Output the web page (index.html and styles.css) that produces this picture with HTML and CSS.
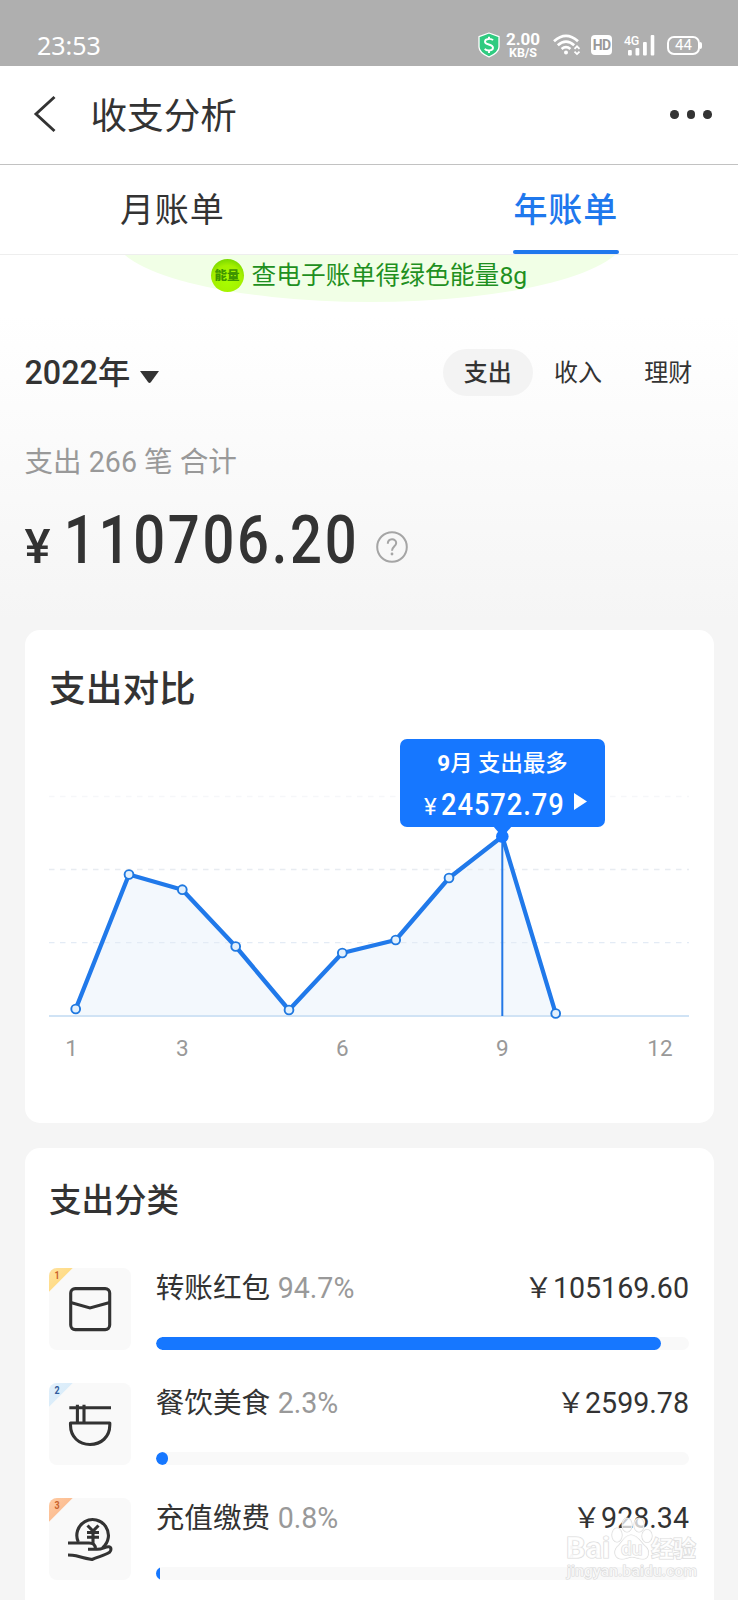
FILE: index.html
```html
<!DOCTYPE html>
<html lang="zh-CN">
<head>
<meta charset="utf-8">
<title>收支分析</title>
<link rel="stylesheet" href="styles.css">
</head>
<body>
<div class="screen">
  <div class="status">
    <span class="clock">23:53</span>
    <div class="status-icons">
      <svg class="shield" width="22" height="26" viewBox="0 0 22 26"><path d="M11 1 L21 4.600 V15 Q21 20.500 11 25 Q1 20.500 1 15 V4.600 Z" fill="#2fcb80" stroke="#fff" stroke-width="1.300" stroke-linejoin="round"/><path d="M15 8.300 C13.500 6.300 7 6.200 7 9.700 C7 13.200 15 11.800 15 15.800 C15 19.300 8.300 19.200 6.800 16.800 M11 4.700 V7 M11 18.500 V21" fill="none" stroke="#fff" stroke-width="1.900"/></svg>
      <div class="speed"><span class="rate">2.00</span><span class="unit">KB/S</span></div>
      <svg class="wifi" width="28" height="22" viewBox="0 0 28 22" fill="none" stroke="#fff" stroke-width="2.700"><path d="M1 7.300 Q13 -3.700 25 7.300"/><path d="M4.800 11.300 Q13 4 21.200 11.300"/><path d="M8.600 15 Q13 11.300 17.400 15"/><circle cx="13" cy="18.600" r="2" fill="#fff" stroke="none"/><path d="M21.500 14.800 L24 12.300 L26.500 14.800 M21.500 17.600 L24 20.100 L26.500 17.600" stroke-width="1.800"/></svg>
      <span class="hd">HD</span>
      <div class="signal"><span class="net">4G</span><svg width="27" height="21" viewBox="0 0 27 21" fill="#fff"><rect x="0" y="15" width="3.800" height="5.500" rx="1"/><rect x="7.500" y="13" width="3.800" height="7.500" rx="1"/><rect x="15" y="7" width="3.800" height="13.500" rx="1"/><rect x="22.700" y="0" width="3.600" height="20.500" rx="1"/></svg></div>
      <div class="battery"><span class="level">44</span></div>
    </div>
  </div>

  <header class="navbar">
    <svg class="back" width="24" height="38" viewBox="0 0 24 38"><path d="M21.500 2 L3 19 L21.500 36" fill="none" stroke="#333" stroke-width="2.900"/></svg>
    <h1 class="title">收支分析</h1>
    <div class="more"><i></i><i></i><i></i></div>
  </header>

  <nav class="tabs">
    <span class="tab">月账单</span>
    <span class="tab active">年账单</span>
  </nav>

  <main class="content">
    <div class="energy">
      <svg class="energy-bg" width="512" height="48" viewBox="0 0 512 48"><ellipse cx="256" cy="-19" rx="256" ry="66" fill="#f1ffe6"/></svg>
      <div class="energy-line"><span class="coin">能量</span><span>查电子账单得绿色能量8g</span></div>
    </div>

    <div class="filter">
      <div class="year">2022年<svg width="19" height="13" viewBox="0 0 19 13"><path d="M0 0 H19 L11 11 Q9.500 13 8 11 Z" fill="#333"/></svg></div>
      <div class="kinds"><span class="kind on">支出</span><span class="kind">收入</span><span class="kind">理财</span></div>
    </div>

    <p class="count">支出 266 笔 合计</p>
    <div class="total">
      <span class="yen">¥</span><span class="sum">110706.20</span>
      <svg class="help" width="32" height="32" viewBox="0 0 32 32" fill="none" stroke="#a5a5a5"><circle cx="16" cy="16" r="14.800" stroke-width="2"/><path d="M11.800 12.800 C11.800 7 20.200 7 20.200 12 C20.200 15.300 16 15.300 16 19.800" stroke-width="2"/><circle cx="16" cy="23" r="1.400" fill="#a5a5a5" stroke="none"/></svg>
    </div>

    <section class="card compare">
      <h2 class="card-title large">支出对比</h2>
      <div class="chart">
        <svg width="640" height="340" viewBox="49 730 640 340">
          <path d="M75.700 1009 L129 874.500 L182.300 889.700 L235.700 946.500 L289 1010 L342.300 953 L395.700 940 L449 878 L502.300 836.500 L555.700 1013.500 V1016 H75.700 Z" fill="#f3f8fd"/>
          <g stroke-width="1.300" stroke-dasharray="5.500 5.500">
            <path d="M49 796.500 H689" stroke="#f6f7f9"/>
            <path d="M49 869.500 H689" stroke="#e8ecf1"/>
            <path d="M49 942.700 H689" stroke="#e3ebf5"/>
          </g>
          <path d="M49 1016 H689" stroke="#d0e3f5" stroke-width="2"/>
          <path d="M502.300 836 V1016" stroke="#2378e6" stroke-width="2"/>
          <path d="M75.700 1009 L129 874.500 L182.300 889.700 L235.700 946.500 L289 1010 L342.300 953 L395.700 940 L449 878 L502.300 836.500 L555.700 1013.500" fill="none" stroke="#2079ea" stroke-width="4.300" stroke-linejoin="round"/>
          <g fill="#e2f0fd" stroke="#2079e0" stroke-width="1.900">
            <circle cx="75.700" cy="1009" r="4.400"/><circle cx="129" cy="874.500" r="4.400"/><circle cx="182.300" cy="889.700" r="4.400"/><circle cx="235.700" cy="946.500" r="4.400"/><circle cx="289" cy="1010" r="4.400"/><circle cx="342.300" cy="953" r="4.400"/><circle cx="395.700" cy="940" r="4.400"/><circle cx="449" cy="878" r="4.400"/><circle cx="555.700" cy="1013.500" r="4.400"/>
          </g>
          <path d="M493 826 H512 L502.500 837 Z" fill="#1677ff"/><circle cx="502.300" cy="836.500" r="6.300" fill="#1677ff"/>
          <g class="axis"><text x="71.500" y="1055.500">1</text><text x="182.300" y="1055.500">3</text><text x="342.300" y="1055.500">6</text><text x="502.300" y="1055.500">9</text><text x="660" y="1055.500">12</text></g>
        </svg>
        <div class="tip">
          <span class="tip-name"><strong>9</strong>月 支出最多</span>
          <span class="tip-sum"><span class="tip-yen">¥</span><span class="tip-num">24572.79</span><svg width="13" height="17" viewBox="0 0 13 17"><path d="M0 0 L13 8.500 L0 17 Z" fill="#fff"/></svg></span>
        </div>
      </div>
    </section>

    <section class="card sorts">
      <h2 class="card-title">支出分类</h2>
      <div class="row">
        <div class="icon first"><span class="rank">1</span><svg width="82" height="82" viewBox="0 0 82 82"><rect x="21.700" y="20.600" width="39" height="41" rx="4.500"/><path d="M21.700 34.500 L41 40 L60.700 34.500"/></svg></div>
        <div class="info"><div class="line"><span>转账红包 <em>94.7%</em></span><span><span class="cny">￥</span>105169.60</span></div><div class="bar"><b style="width:94.700%"></b></div></div>
      </div>
      <div class="row">
        <div class="icon second"><span class="rank">2</span><svg width="82" height="82" viewBox="0 0 82 82"><path d="M20.300 24.800 H62 M28.400 21.700 V40 M35 21.700 V40"/><path d="M21.500 40 H60.800 V42 C60.800 54 52 61.500 41 61.500 C30 61.500 21.500 54 21.500 42 Z" stroke-linejoin="round"/></svg></div>
        <div class="info"><div class="line"><span>餐饮美食 <em>2.3%</em></span><span><span class="cny">￥</span>2599.78</span></div><div class="bar"><b style="width:2.300%"></b></div></div>
      </div>
      <div class="row">
        <div class="icon third"><span class="rank">3</span><svg width="82" height="82" viewBox="0 0 82 82"><path d="M29.300 44 A15.800 15.800 0 1 1 53.500 49.700"/><path d="M19 45 H40 Q46.500 45 46.500 51 M39 51.300 H48 C54 51.300 56 48.500 60 48.800 C62.500 49.300 62.500 52.500 60.500 54.300 C56 57.300 50 58.500 43 61.500 Q36 60.500 27 57.800 Q24 57 19 57"/><path d="M38.500 27.500 L44 33 L49.500 27.500 M44 33 V46 M38 34.500 H50 M38 39.300 H50"/></svg></div>
        <div class="info"><div class="line"><span>充值缴费 <em>0.8%</em></span><span><span class="cny">￥</span>928.34</span></div><div class="bar"><b style="width:.800%"></b></div></div>
      </div>
    </section>
  </main>

  <div class="watermark">
    <svg width="136" height="70" viewBox="0 0 136 70">
      <g class="mark"><ellipse cx="53" cy="22" rx="5" ry="7"/><ellipse cx="63" cy="12" rx="5" ry="7"/><ellipse cx="75" cy="12" rx="5" ry="7"/><ellipse cx="83" cy="23" rx="5" ry="6.500"/><path d="M67 22 C60 22 58 30 53 34 C49 39 51 46 58 46 C63 46 64 44 68 44 C72 44 74 46 79 46 C85 46 86 38 82 34 C77 30 74 22 67 22 Z"/>
      <text x="2" y="45" font-size="30" font-weight="700" textLength="44" lengthAdjust="spacingAndGlyphs">Bai</text><text x="57" y="42" font-size="19" font-weight="500">du</text><text x="87" y="44" font-size="23" font-weight="700" textLength="45">经验</text><text x="3" y="63" font-size="15.500" font-weight="500" textLength="130">jingyan.baidu.com</text></g>
    </svg>
  </div>
</div>
</body>
</html>
```
FILE: styles.css
```css
* { box-sizing: border-box; margin: 0; padding: 0; }
body {
  width: 738px; height: 1600px; overflow: hidden; color: #333;
  font-family: Roboto, "Noto Sans CJK SC", sans-serif; background: #f5f5f5;
}
.screen { position: relative; height: 1600px; overflow: hidden; display: flex; flex-direction: column; }
h1, h2 { font-weight: 400; }

.status { height: 65.5px; flex: none; background: #afafaf; color: #fff; display: flex; justify-content: space-between; padding: 32px 38px 0 37px; }
.clock { font: 400 25px/26px "Noto Sans", sans-serif; }
.status-icons { display: flex; align-items: flex-start; }
.shield { margin: 0 6px 0 0; }
.speed { display: flex; flex-direction: column; align-items: center; width: 34px; margin-right: 13px; font-weight: 700; }
.rate { font-size: 17px; line-height: 14px; }
.unit { font-size: 12.5px; line-height: 14px; letter-spacing: -.1px; }
.wifi { margin: 2px 10px 0 0; }
.hd { width: 21px; height: 20px; margin: 3px 12px 0 0; border-radius: 4px; background: #fff; color: #999; font-size: 14px; font-weight: 700; line-height: 20px; text-align: center; letter-spacing: -.8px; }
.signal { position: relative; width: 31px; height: 21px; margin: 3px 12px 0 0; padding-left: 4px; }
.signal svg { display: block; }
.net { position: absolute; left: 0; top: -1px; font-size: 12.5px; font-weight: 500; line-height: 13px; letter-spacing: -.4px; }
.battery { position: relative; width: 33px; height: 19px; margin-top: 3.5px; border: 2px solid #fff; border-radius: 7px; text-align: center; }
.battery::after { content: ""; position: absolute; right: -3.5px; top: 4px; width: 2px; height: 7px; border-radius: 0 2px 2px 0; background: #fff; }
.level { display: block; font-size: 15px; line-height: 15px; }

.navbar { height: 99.5px; flex: none; display: flex; align-items: center; padding: 0 26px 1px 33px; background: #fff; border-bottom: 1px solid #c2c2c2; }
.title { margin-left: 33.5px; padding-top: 5px; font-size: 36.6px; line-height: 50px; flex: 1; }
.more { display: flex; gap: 8px; }
.more i { width: 8.6px; height: 8.6px; border-radius: 50%; background: #333; }

.tabs { height: 90px; flex: none; display: flex; justify-content: space-between; padding: 0 119.5px; background: #fff; border-bottom: 1px solid #eee; }
.tab { position: relative; width: 105.5px; text-align: center; font-size: 34px; letter-spacing: .8px; line-height: 90px; white-space: nowrap; }
.tab.active { color: #1f78ed; font-weight: 500; }
.tab.active::after { content: ""; position: absolute; left: 0; bottom: 0; width: 105.5px; height: 4px; border-radius: 2px; background: #1f78ed; }

.content { flex: 1; display: flex; flex-direction: column; padding: 0 24.5px; background: linear-gradient(#fff 0, #fff 60px, #f5f5f5 365px); }
.energy { display: flow-root; position: relative; height: 48px; flex: none; }
.energy-bg { position: absolute; left: 89px; top: 0; }
.energy-line { position: relative; display: flex; align-items: center; padding-left: 186px; height: 34px; margin-top: 3px; color: #1f9021; font-size: 24.7px; line-height: 33px; letter-spacing: .1px; white-space: nowrap; }
.coin { width: 33px; height: 33px; margin-right: 8px; flex: none; border-radius: 50%; background: radial-gradient(circle at 50% 65%, #a8ff00 0, #a4f000 55%, #78d800 80%, #68c50d 100%); color: #3f9500; font-size: 12.5px; font-weight: 900; line-height: 34px; letter-spacing: 0; text-align: center; }

.filter { display: flex; justify-content: space-between; align-items: center; height: 47px; margin-top: 46px; flex: none; }
.year { display: flex; align-items: center; font-size: 32.3px; line-height: 46px; font-weight: 500; }
.year svg { margin: 9px 0 0 9.5px; }
.kinds { display: flex; }
.kind { width: 90.3px; height: 46.5px; border-radius: 24px; text-align: center; font-size: 24px; line-height: 48px; }
.kind.on { background: #f3f3f3; font-weight: 500; }

.count { margin-top: 47px; height: 38px; flex: none; line-height: 38px; font-size: 28.6px; color: #999; }
.total { display: flex; align-items: baseline; height: 80px; margin-top: 20px; flex: none; line-height: 78px; font-weight: 500; }
.yen { width: 38px; font-size: 49px; }
.sum { width: 294px; padding-left: 1px; font-size: 66.5px; letter-spacing: 3.2px; white-space: nowrap; transform: scaleX(.845); transform-origin: left; }
.help { align-self: flex-start; margin: 30px 0 0 19px; }

.card { flex: none; background: #fff; border-radius: 15px; padding: 0 24.5px; }
.compare { height: 493px; margin-top: 49px; padding-top: 35px; }
.card-title { font-size: 32.5px; line-height: 52px; height: 50px; font-weight: 500; }
.card-title.large { font-size: 36.7px; line-height: 50px; }
.chart { position: relative; margin-top: 15px; height: 340px; }
.chart > svg { display: block; }
.axis { font-size: 22.5px; fill: #999; text-anchor: middle; }
.tip { position: absolute; left: 351px; top: 9px; width: 205px; height: 88px; border-radius: 7px; background: #1677ff; color: #fff; display: flex; flex-direction: column; align-items: center; padding-top: 6px; white-space: nowrap; }
.tip-name { height: 36px; font-size: 22.4px; line-height: 36px; font-weight: 500; }
.tip-sum { display: flex; align-items: baseline; align-self: stretch; padding-left: 24px; line-height: 47px; height: 46px; }
.tip-yen { width: 17px; font-size: 24px; }
.tip-num { width: 124px; font-size: 31.5px; font-weight: 500; letter-spacing: 1.1px; transform: scaleX(.865); transform-origin: left; }
.tip-sum svg { align-self: flex-start; margin: 12px 0 0 9px; }

.sorts { flex: 1 0 auto; margin-top: 25px; border-radius: 15px 15px 0 0; padding-top: 27px; }
.row { display: flex; height: 82px; margin-bottom: 33px; }
.card-title + .row { margin-top: 42.7px; }
.icon { position: relative; width: 82px; height: 82px; flex: none; overflow: hidden; border-radius: 8px; background: #f9f9f9; }
.icon svg { display: block; fill: none; stroke: #333; stroke-width: 3.1; }
.icon::before { content: ""; position: absolute; left: 0; top: 0; width: 24px; height: 24px; clip-path: polygon(0 0, 100% 0, 0 100%); }
.first::before { background: linear-gradient(135deg, #ffe2a0, #ffd66e); }
.second::before { background: linear-gradient(135deg, #e2f0fb, #d3e9f8); }
.third::before { background: linear-gradient(135deg, #ffcba3, #f9b283); }
.rank { position: absolute; left: 4.5px; top: 2px; font-size: 10.5px; line-height: 12px; font-weight: 700; color: #c8622c; transform: scaleX(.85); }
.second .rank { color: #315b9c; }
.info { flex: 1; margin-left: 24.7px; display: flex; flex-direction: column; justify-content: space-between; }
.line { display: flex; justify-content: space-between; font-size: 28.6px; line-height: 41px; white-space: nowrap; }
.line em { margin-left: .5px; font-style: normal; color: #999; }
.bar { height: 12.5px; border-radius: 6.5px; background: #f9f9f9; overflow: hidden; }
.bar b { display: block; height: 100%; border-radius: 6.5px; background: #1677ff; }
.row:last-child .bar b { border-radius: 0; }

.watermark { position: absolute; left: 564px; top: 1513px; }
.mark { fill: #fff; fill-opacity: .75; stroke: #dadada; stroke-width: 1.2; paint-order: stroke; }
```
